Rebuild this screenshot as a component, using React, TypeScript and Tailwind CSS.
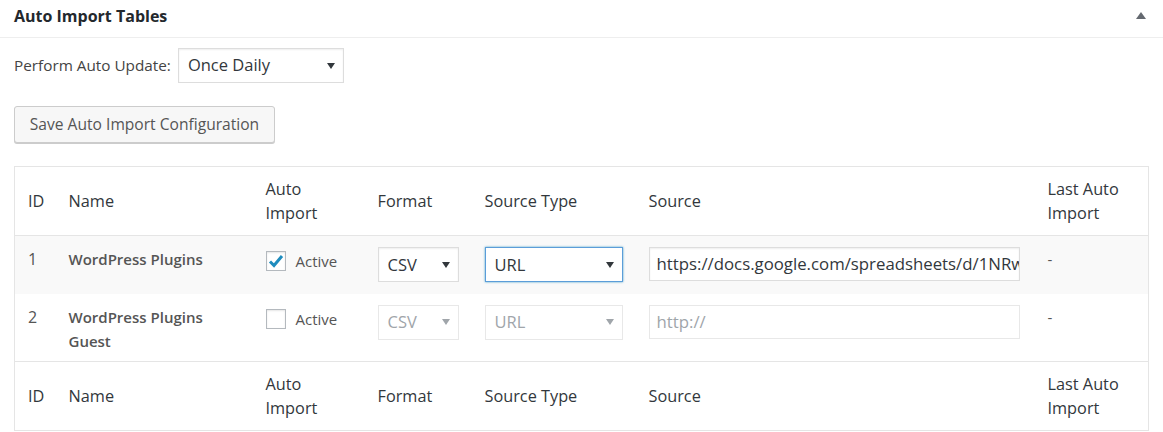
import React from "react";

const font = { fontFamily: '"Open Sans", "Noto Sans", sans-serif' };

function Arrow({ muted = false }: { muted?: boolean }) {
  return (
    <svg width="8" height="6" viewBox="0 0 8 6" className="shrink-0">
      <polygon points="0,0 8,0 4,6" fill={muted ? "#a0a5aa" : "#32373c"} />
    </svg>
  );
}

function FakeSelect({
  value,
  width,
  focused = false,
  disabled = false,
}: {
  value: string;
  width: string;
  focused?: boolean;
  disabled?: boolean;
}) {
  return (
    <div
      className={`${width} h-[35px] flex items-center justify-between pl-[9px] pr-[8px] bg-white border text-[16.5px] ${
        focused
          ? "border-[#5b9dd9] shadow-[0_0_2px_rgba(30,140,190,0.8)]"
          : disabled
          ? "border-[#e8e8e8]"
          : "border-[#ddd] shadow-[inset_0_1px_2px_rgba(0,0,0,0.07)]"
      } ${disabled ? "text-[#a0a5aa]" : "text-[#32373c]"}`}
    >
      <span>{value}</span>
      <Arrow muted={disabled} />
    </div>
  );
}

function Checkbox({ checked }: { checked: boolean }) {
  return (
    <div className="w-[20px] h-[20px] border border-[#b4b9be] bg-white shadow-[inset_0_1px_2px_rgba(0,0,0,0.1)] flex items-center justify-center">
      {checked && (
        <svg width="16" height="14" viewBox="0 0 16 14">
          <path d="M2 7.5 L6 11.5 L14 2" fill="none" stroke="#1e8cbe" strokeWidth="3" />
        </svg>
      )}
    </div>
  );
}

function HeadRow({ top }: { top: boolean }) {
  const cls = "px-[13px] align-middle font-normal text-left";
  return (
    <tr className={`h-[69px] text-[16.3px] leading-[24px] text-[#32373c] ${top ? "border-b" : "border-t"} border-[#e5e5e5]`}>
      <th className={cls}>ID</th>
      <th className={cls}>Name</th>
      <th className={cls}>
        Auto
        <br />
        Import
      </th>
      <th className={cls}>Format</th>
      <th className={cls}>Source Type</th>
      <th className={cls}>Source</th>
      <th className={cls}>
        Last Auto
        <br />
        Import
      </th>
    </tr>
  );
}

type Row = {
  id: number;
  name: React.ReactNode;
  active: boolean;
  source: string;
  placeholder: boolean;
  alt: boolean;
  height: string;
};

const rows: Row[] = [
  {
    id: 1,
    name: "WordPress Plugins",
    active: true,
    source: "https://docs.google.com/spreadsheets/d/1NRwCWmDnBo",
    placeholder: false,
    alt: true,
    height: "h-[58px]",
  },
  {
    id: 2,
    name: (
      <>
        WordPress Plugins
        <br />
        Guest
      </>
    ),
    active: false,
    source: "http://",
    placeholder: true,
    alt: false,
    height: "h-[68px]",
  },
];

export default function App() {
  const td = "px-[13px] pt-[11px] align-top";
  return (
    <div className="w-[1163px] h-[432px] bg-white overflow-hidden" style={font}>
      {/* panel title bar */}
      <div className="h-[38px] flex items-center justify-between pl-[14px] pr-[17px] pb-[6px] border-b border-[#eee]">
        <h2 className="text-[16px] font-bold text-[#23282d] leading-none">Auto Import Tables</h2>
        <svg width="10" height="7" viewBox="0 0 10 7">
          <polygon points="0,7 10,7 5,0" fill="#646970" />
        </svg>
      </div>

      <div className="px-[14px]">
        <div className="mt-[10px] flex items-center gap-[7px] text-[15.3px] text-[#444]">
          <span>Perform Auto Update:</span>
          <FakeSelect value="Once Daily" width="w-[166px]" />
        </div>

        <button className="mt-[23px] h-[37px] w-[261px] rounded-[3px] border border-[#ccc] bg-[#f7f7f7] shadow-[0_1px_0_#ccc] text-[15.6px] text-[#555] flex items-center justify-center">
          Save Auto Import Configuration
        </button>

        <table className="mt-[23px] w-[1134px] table-fixed border border-[#e5e5e5] border-collapse">
          <colgroup>
            <col className="w-[41px]" />
            <col className="w-[197px]" />
            <col className="w-[112px]" />
            <col className="w-[107px]" />
            <col className="w-[164px]" />
            <col className="w-[399px]" />
            <col className="w-[114px]" />
          </colgroup>
          <thead>
            <HeadRow top />
          </thead>
          <tbody className="text-[15px] leading-[24px] text-[#555]">
            {rows.map((r) => (
              <tr key={r.id} className={`${r.height} ${r.alt ? "bg-[#f9f9f9]" : "bg-white"}`}>
                <td className={`${td} text-[16px]`}>{r.id}</td>
                <td className={`${td} font-semibold`}>{r.name}</td>
                <td className={`${td} pt-[13px]`}>
                  <div className="flex items-center gap-[10px]">
                    <Checkbox checked={r.active} />
                    <span>Active</span>
                  </div>
                </td>
                <td className={td}>
                  <FakeSelect value="CSV" width="w-[81px]" disabled={!r.alt} />
                </td>
                <td className={td}>
                  <FakeSelect value="URL" width="w-[138px]" focused={r.alt} disabled={!r.alt} />
                </td>
                <td className={td}>
                  <div
                    className={`w-[371px] h-[34px] flex items-center px-[7px] bg-white border overflow-hidden whitespace-nowrap text-[16.8px] ${
                      r.placeholder
                        ? "border-[#e8e8e8] text-[#a0a5aa]"
                        : "border-[#ddd] text-[#32373c] shadow-[inset_0_1px_2px_rgba(0,0,0,0.07)]"
                    }`}
                  >
                    {r.source}
                  </div>
                </td>
                <td className={td}>-</td>
              </tr>
            ))}
          </tbody>
          <tfoot>
            <HeadRow top={false} />
          </tfoot>
        </table>
      </div>
    </div>
  );
}
